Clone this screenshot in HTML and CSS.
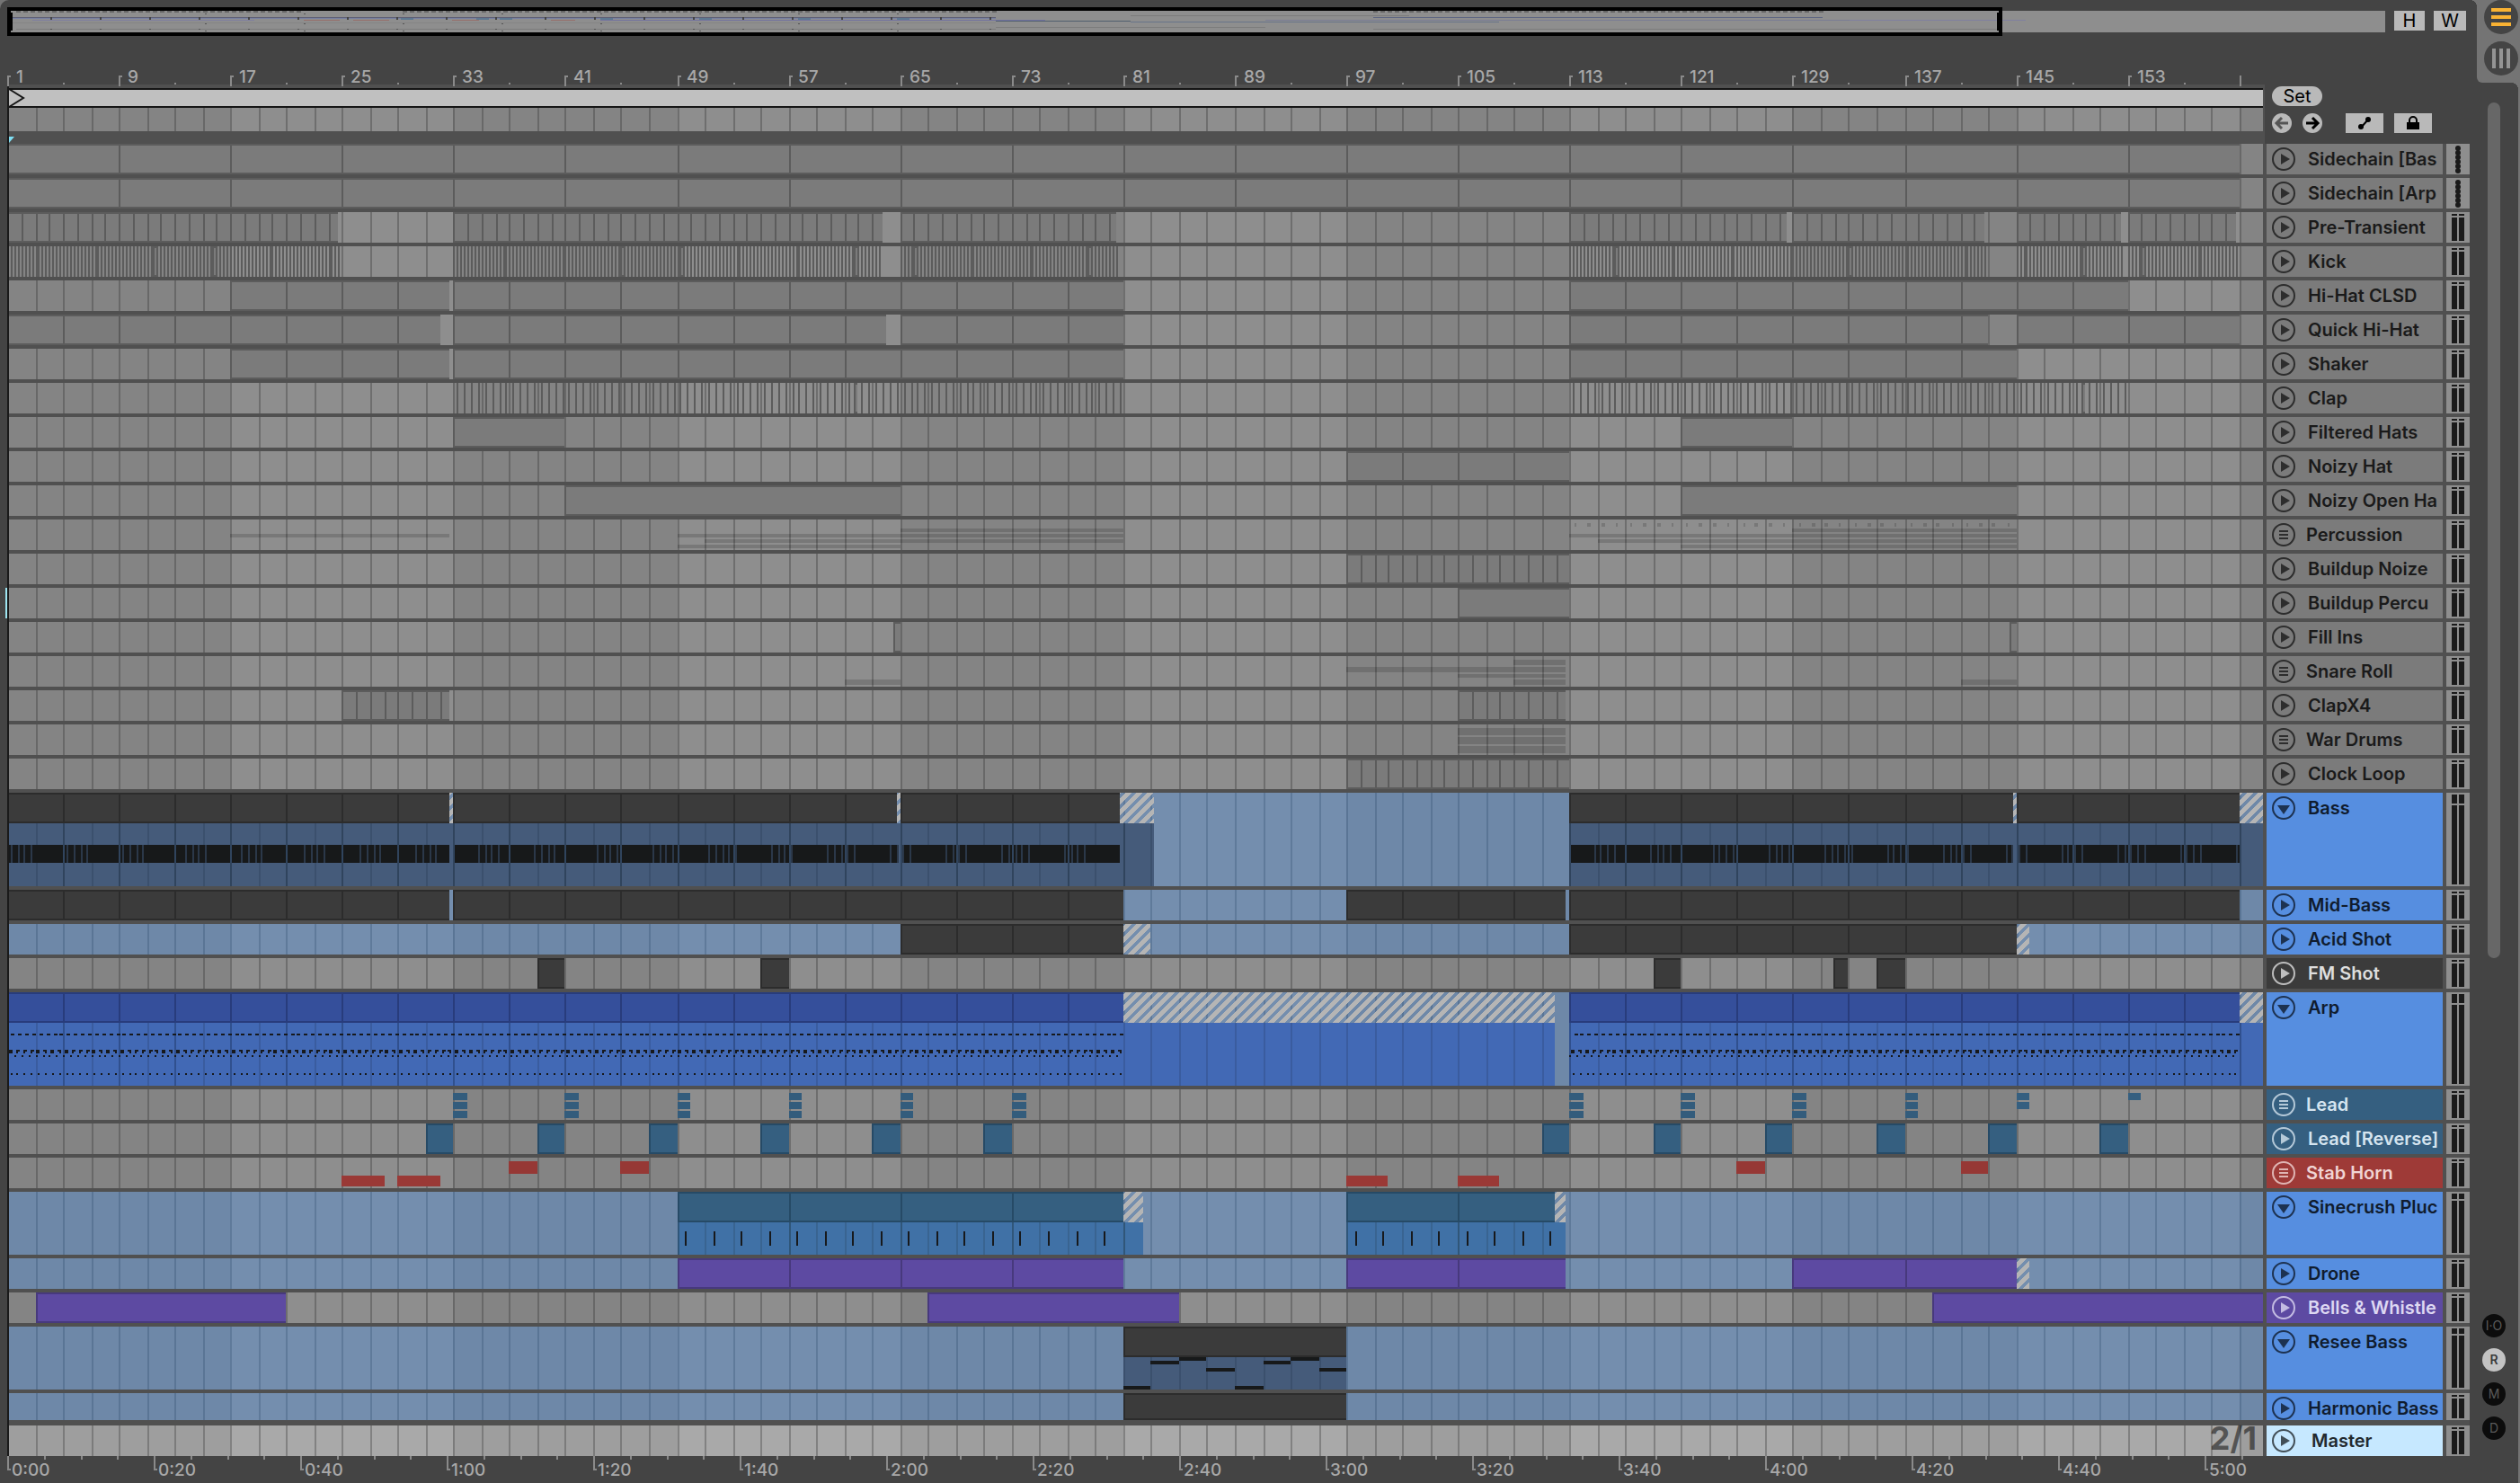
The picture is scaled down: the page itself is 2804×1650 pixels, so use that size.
FILE: index.html
```html
<!DOCTYPE html>
<html lang="en">
<head>
<meta charset="utf-8">
<title>Arrangement View</title>
<link rel="stylesheet" href="styles.css">
</head>
<body>
<svg class="defs" aria-hidden="true">
  <defs>
    <pattern id="hatch" width="12" height="12" patternUnits="userSpaceOnUse">
      <path d="M-3 3L3 -3M-3 15L15 -3M9 15L15 9" stroke="#b5b5b5" stroke-width="5"/>
    </pattern>
    <symbol id="icon-play" viewBox="0 0 26 26"><circle cx="13" cy="13" r="12" fill="none" stroke="currentColor" stroke-width="2"/><path d="M10 7L20 13L10 19Z" fill="currentColor"/></symbol>
    <symbol id="icon-open" viewBox="0 0 26 26"><circle cx="13" cy="13" r="12" fill="none" stroke="currentColor" stroke-width="2"/><path d="M6 10H20L13 20Z" fill="currentColor"/></symbol>
    <symbol id="icon-group" viewBox="0 0 26 26"><circle cx="13" cy="13" r="12" fill="none" stroke="currentColor" stroke-width="2"/><path d="M8 9H18M8 13H18M8 17H18" stroke="currentColor" stroke-width="2"/></symbol>
  </defs>
</svg>
<main class="app">
  <div class="top">
    <svg class="overview" id="overview" role="img" aria-label="Arrangement overview"></svg>
    <button class="square fit-height">H</button>
    <button class="square fit-width">W</button>
  </div>
  <nav class="views" aria-label="Views">
    <button class="view" aria-label="Arrangement view"><svg width="38" height="38"><circle cx="19" cy="19" r="19" fill="#444"/><path d="M8 11H30M8 19H30M8 27H30" stroke="#f9b233" stroke-width="4"/></svg></button>
    <button class="view" aria-label="Session view"><svg width="38" height="38"><circle cx="19" cy="19" r="19" fill="#444"/><path d="M11 8V30M19 8V30M27 8V30" stroke="#949494" stroke-width="4"/></svg></button>
  </nav>
  <div class="body">
    <div class="content">
      <svg class="bar-ruler" id="bar-ruler"></svg>
      <div class="head">
        <div class="head-lanes">
          <svg class="scrub" id="scrub"></svg>
          <svg class="lane" id="locators"></svg>
          <svg class="insert" width="16" height="14"><path d="M2 6H8L2 13Z" fill="#7fe0f5"/></svg>
        </div>
        <div class="controls">
          <button class="set">Set</button>
          <div class="control-row">
            <button class="round" aria-label="Previous locator"><svg width="22" height="22"><path d="M18 11H6M11 5L5 11L11 17" fill="none" stroke="#555" stroke-width="3"/></svg></button>
            <button class="round" aria-label="Next locator"><svg width="22" height="22"><path d="M4 11H16M11 5L17 11L11 17" fill="none" stroke="#000" stroke-width="3"/></svg></button>
            <button class="square tool" aria-label="Automation mode"><svg width="42" height="22"><path d="M17 16L25 7" stroke="#000" stroke-width="2"/><circle cx="17" cy="15" r="3" fill="#000"/><circle cx="25" cy="7" r="3" fill="#000"/></svg></button>
            <button class="square tool lock" aria-label="Lock envelopes"><svg width="42" height="22"><path d="M14 10H28V18H14Z" fill="#000"/><path d="M17 11V8A4 4 0 0 1 25 8V11" fill="none" stroke="#000" stroke-width="2"/></svg></button>
          </div>
        </div>
      </div>
      <div class="tracks" id="tracks"></div>
      <svg class="time-ruler" id="time-ruler"></svg>
    </div>
    <aside class="side">
      <div class="thumb"></div>
      <div class="sections">
        <button class="section">I·O</button>
        <button class="section on">R</button>
        <button class="section">M</button>
        <button class="section">D</button>
      </div>
    </aside>
  </div>
</main>
<script src="script.js"></script>
</body>
</html>
```
FILE: styles.css
```css
* { box-sizing: border-box; }
body {
  margin: 0;
  background: #747474;
  color: #1a1a1a;
  font-family: Inter, "Liberation Sans", sans-serif;
  font-size: 20px;
}
button { margin: 0; padding: 0; border: 0; background: none; color: inherit; font: inherit; }
svg { display: block; shape-rendering: crispEdges; }
button svg, .insert, .meter { shape-rendering: auto; }
.defs { position: absolute; width: 0; height: 0; }
.app {
  position: relative;
  min-height: 100vh;
  margin-right: 2px;
  background: #444;
  border-radius: 10px 0 0 0;
}
.top { display: flex; padding: 8px 58px 0 8px; }
.overview { flex: 1; min-width: 0; height: 32px; margin-right: 10px; }
.square { background: #b9b9b9; color: #000; }
.fit-height, .fit-width { height: 22px; margin-top: 4px; line-height: 22px; }
.fit-height { width: 34px; margin-right: 10px; }
.fit-width { width: 36px; }
.views {
  position: absolute;
  top: 0;
  right: -2px;
  width: 48px;
  height: 92px;
  padding-left: 8px;
  background: #747474;
  border-bottom-left-radius: 6px;
}
.views::before {
  content: "";
  position: absolute;
  top: 0;
  left: -8px;
  width: 8px;
  height: 8px;
  background: radial-gradient(circle at 0 100%, #444 8px, #747474 8px);
}
.views::after {
  content: "";
  position: absolute;
  top: 92px;
  right: 2px;
  width: 8px;
  height: 8px;
  background: radial-gradient(circle at 0 100%, #444 8px, #747474 8px);
}
.view { display: block; margin-bottom: 8px; }

.body { display: flex; padding-left: 8px; }
.content { flex: 1; min-width: 0; }
.bar-ruler { width: 100%; height: 56px; }
.head { display: flex; gap: 8px; }
.head-lanes { flex: 1; min-width: 0; height: 64px; padding-right: 2px; background: #505050; }
.scrub { width: 100%; height: 24px; }
.head-lanes .lane { width: 100%; height: 26px; }
.controls { width: 220px; }
.set { display: block; width: 56px; height: 22px; border-radius: 11px; background: #b9b9b9; color: #000; line-height: 22px; }
.control-row { display: flex; margin-top: 8px; }
.round { width: 22px; height: 22px; margin-right: 12px; border-radius: 50%; background: #b9b9b9; }
.tool { width: 42px; height: 22px; margin-left: 14px; }
.lock { margin-left: 12px; }

.tracks { position: relative; background: #505050; }
.tracks::before { content: ""; position: absolute; left: 0; top: -64px; bottom: 0; width: 2px; background: #1a1a1a; }
.track { display: flex; gap: 4px; margin-bottom: 4px; height: 34px; }
.track.mid { height: 70px; }
.track.tall { height: 104px; }
.track.cut { height: 30px; margin-bottom: 6px; }
.track:last-child { margin-bottom: 0; }
.track .lane { flex: 1; min-width: 0; height: 100%; }
.track:last-child .lane { overflow: visible; }
.name {
  display: flex;
  width: 196px;
  gap: 14px;
  padding: 4px 0 0 6px;
  overflow: hidden;
  white-space: nowrap;
  font-weight: 600;
  line-height: 26px;
  background: #7b7b7b;
}
.name.group { gap: 12px; }
.toggle { flex: none; width: 26px; height: 26px; opacity: .8; }
.toggle svg { width: 26px; height: 26px; }
.name.blue { background: #568ee0; color: #101c2e; }
.name.dark { background: #3b3b3b; color: #dedede; }
.name.teal { background: #355f80; color: #d5e4ef; }
.name.red { background: #9e3a37; color: #f0d4d3; }
.name.purple { background: #5d4aa2; color: #ddd8f2; }
.name.master { background: #c6e8ff; color: #22292e; gap: 18px; }
.meter { width: 26px; height: 100%; background: #8e8e8e; }
.time-ruler { width: 100%; height: 30px; }

.side { display: flex; flex-direction: column; justify-content: space-between; width: 54px; padding: 74px 0 48px 0; }
.thumb { flex: 0 1 952px; width: 14px; margin-left: 20px; border-radius: 7px; background: #676767; }
.sections { display: flex; flex-direction: column; gap: 12px; margin-left: 14px; }
.section { width: 26px; height: 26px; border-radius: 50%; background: #0c0c0c; color: #5a5a5a; font-size: 14px; line-height: 26px; }
.section.on { background: #c3c3c3; color: #3a3a3a; font-weight: 600; }
svg text { font-family: Inter, "Liberation Sans", sans-serif; font-size: 19px; font-weight: 500; fill: #a8a8a8; }
svg .zoom-label { font-size: 36px; font-weight: 700; fill: #000; fill-opacity: .5; }
```
FILE: script.js
```js
// The visible part of the song, in bars, and the colours of each kind of clip.
const VISIBLE = 161.7;
const END = 170;
const FILL = { grey: ['#7b7b7b', '#5c5c5c'], dark: ['#3b3b3b', '#2c2c2c'], arp: ['#354f9b', '#283c7c'],
  teal: ['#355f80', '#264a66'], purple: ['#5d4aa2', '#47397d'] };
const LANE = { grey: ['#848484', '#8e8e8e', '#686868', '#6e6e6e'], blue: ['#6e88a8', '#748eae', '#5a7595', '#5f7a9a'],
  master: ['#9e9e9e', '#a9a9a9', '#7b7b7b', '#818181'] };

const rect = (x, y, w, h, fill) => w > 0 ? `<rect x="${x}" y="${y}" width="${w}" height="${h}" fill="${fill}"/>` : '';
// Positions snap to two-pixel steps.
const at = (bar, width) => Math.min(Math.round(bar * width / VISIBLE / 2) * 2, width);

function grid(width, h, kind) {
  const c = LANE[kind];
  let s = '';
  for (let b = 0; b < VISIBLE; b += 16) {
    s += rect(at(b, width), 0, at(b + 16, width) - at(b, width), h, c[(b / 16) % 2]);
  }
  for (let b = 2; b < VISIBLE; b += 2) s += rect(at(b, width), 0, 2, h, c[2 + Math.floor(b / 16) % 2]);
  return s;
}
function clip(width, from, to, h, colour) {
  const x = at(from, width), w = at(to, width) - x, [body, edge] = FILL[colour];
  return rect(x, 0, w, h, edge) + rect(x + 2, 2, w - 2, h - 4, body);
}
// A run of clips, one every `step` bars.
const run = (from, to, step, colour = 'grey') => (w, h) => {
  let s = '';
  for (let b = from; b < to; b += step) s += clip(w, b, Math.min(b + step, to), Math.min(h, 34), colour);
  return s;
};
const hits = (from, to, step, offset, length) => w => {
  let s = '';
  for (let b = from + offset; b < to; b += step) s += clip(w, b, b + length, 34, 'grey');
  return s;
};
const bar = (from, to, y, h, fill = 'rgba(0,0,0,.15)') => w => rect(at(from, w), y, at(to, w) - at(from, w), h, fill);
const hatch = (from, to) => bar(from, to, 0, 34, 'url(#hatch)');
const stack = (from, to, rows, fill) => w => rows.map(([y, h]) => bar(from, to, y, h, fill)(w)).join('');
const lower = (from, to, body, minor, major, step) => (w, h) => {
  let s = bar(from, to, 34, h - 34, body)(w);
  for (let b = from; b < to; b += 2) s += rect(at(b, w), 34, 2, h - 34, b % step ? minor : major);
  return s;
};
const ticks = (from, to, step, offset, y, wide, h = 2) => w => {
  let s = '';
  for (let b = from + offset; b < to; b += step) s += rect(at(b, w), y, wide, h, '#17191c');
  return s;
};
const bassNotes = (from, to) => w => {
  let s = '';
  for (let b = from; b < to; b += 4) {
    const x = at(b, w) + 2;
    s += rect(x, 58, at(Math.min(b + 4, to), w) - x, 20, '#17191a');
    const first = .22 + .5 * Math.floor((b / 4) / 2.5);
    for (let i = 0; i < 4; i++) {
      const g = b + (first + i * .5) % 4;
      if (g < to) s += rect(at(g, w), 58, 2, 20, '#2b3849');
    }
  }
  return s;
};
const arpNotes = (from, to) => w => [
  ticks(from, to, .5, .3, 46, 4), ticks(from, to, .5, .12, 64, 4),
  ticks(from, to, .5, .2, 66, 2), ticks(from, to, 1, .12, 66, 2, 2), ticks(from, to, .5, .02, 70, 2), ticks(from, to, .5, .2, 90, 2)
].map(f => f(w)).join('');
const percussionDots = w => {
  let s = '';
  for (let b = 112; b < 144; b += 4) {
    [[.4, 2], [1.3, 4], [2.3, 4], [3.35, 2]].forEach(([o, n]) => { s += rect(at(b + o, w), 4, n, 4, 'rgba(0,0,0,.15)'); });
  }
  return s;
};
const each = (starts, make) => starts.map(make);
const THREE = [[4, 8], [14, 8], [24, 8]];
const BASS = ['#455b7a', '#3b506d', '#30445d', 4], ARP = ['#4269b5', '#3a5c9f', '#30508e', 4], SINE = ['#4071a6', '#396491', '#305679', 8];

const TRACKS = [
  ['Sidechain [Bas', { midi: 1 }, run(0, 160, 8)],
  ['Sidechain [Arp', { midi: 1 }, run(0, 160, 8)],
  ['Pre-Transient', {}, run(0, 23.7, 1), run(32, 62.7, 1), run(64, 79.5, 1), run(112, 127.5, 1), run(128, 141.7, 1), run(144, 151.5, 1), run(152, 159.75, 1)],
  ['Kick', {}, ...[[0, 24], [32, 62.7], [64, 79.7], [112, 127.9], [128, 142], [144, 151.6], [152, 159.9]].map(([a, b]) => hits(a, b, .25, 0, .132))],
  ['Hi-Hat CLSD', {}, run(16, 31.75, 4), run(32, 80, 4), run(112, 152, 4)],
  ['Quick Hi-Hat', {}, run(0, 31, 4), run(32, 63, 4), run(64, 80, 4), run(112, 142, 4), run(144, 160, 4)],
  ['Shaker', {}, run(16, 31.75, 4), run(32, 80, 4), run(112, 144, 4)],
  ['Clap', {}, hits(32, 80, .5, .25, .13), hits(112, 152, .5, .25, .13)],
  ['Filtered Hats', {}, run(32, 40, 8), run(120, 128, 8)],
  ['Noizy Hat', {}, run(96, 112, 4)],
  ['Noizy Open Ha', {}, run(40, 64, 24), run(120, 144, 24)],
  ['Percussion', { icon: 'group' }, bar(16, 31.75, 16, 4), bar(48, 80, 16, 4), bar(50, 80, 22, 4), bar(48, 64, 28, 4), bar(64, 80, 10, 4),
    bar(128, 144, 10, 4), bar(112, 144, 16, 4), bar(114, 144, 22, 4), bar(120, 144, 28, 4), percussionDots],
  ['Buildup Noize', {}, run(96, 112, 1)],
  ['Buildup Percu', {}, run(104, 112, 8)],
  ['Fill Ins', {}, run(63.5, 64, 1), run(143.5, 144, 1)],
  ['Snare Roll', { icon: 'group' }, bar(60, 64, 26, 6), bar(96, 111.75, 12, 6), bar(104, 111.75, 20, 4), bar(108, 111.75, 4, 6), bar(108, 111.75, 26, 6), bar(140, 144, 26, 6)],
  ['ClapX4', {}, run(24, 31.75, 1), run(104, 111.75, 1)],
  ['War Drums', { icon: 'group' }, stack(104, 111.75, THREE)],
  ['Clock Loop', {}, run(96, 112, 1)],
  ['Bass', { size: 'tall', lane: 'blue', name: 'blue' }, lower(0, 82.2, ...BASS), lower(112, END, ...BASS),
    run(0, 31.75, 4, 'dark'), run(32, 63.75, 4, 'dark'), run(64, 79.7, 4, 'dark'), run(112, 143.75, 4, 'dark'), run(144, 160, 4, 'dark'),
    hatch(31.75, 32), hatch(63.75, 64), hatch(79.7, 82.2), hatch(143.75, 144), hatch(160, END),
    bassNotes(0, 31.75), bassNotes(32, 63.75), bassNotes(64, 79.7), bassNotes(112, 143.75), bassNotes(144, 160)],
  ['Mid-Bass', { lane: 'blue', name: 'blue' }, run(0, 31.75, 4, 'dark'), run(32, 80, 4, 'dark'), run(96, 111.7, 4, 'dark'), run(112, 160, 4, 'dark')],
  ['Acid Shot', { lane: 'blue', name: 'blue' }, run(64, 80, 4, 'dark'), hatch(80, 81.9), run(112, 144, 4, 'dark'), hatch(144, 145)],
  ['FM Shot', { name: 'dark' }, ...each([38, 54, 118, 134], b => run(b, b + 2, 2, 'dark')), run(130.9, 132, 2, 'dark')],
  ['Arp', { size: 'tall', lane: 'blue', name: 'blue' }, lower(0, 80, ...ARP), lower(80, 110.9, ARP[0], ARP[1], ARP[1], 4), lower(112, END, ...ARP),
    run(0, 80, 4, 'arp'), hatch(80, 110.9), run(112, 160, 4, 'arp'), hatch(160, END), arpNotes(0, 80), arpNotes(112, 160)],
  ['Lead', { icon: 'group', name: 'teal' }, ...each([32, 40, 48, 56, 64, 72, 112, 120, 128, 136], b => stack(b, b + 1, THREE, '#335c7c')),
    stack(144, 145, THREE.slice(0, 2), '#355f80'), stack(152, 153, THREE.slice(0, 1), '#355f80')],
  ['Lead [Reverse]', { name: 'teal' }, ...each([30, 38, 46, 54, 62, 70, 110, 118, 126, 134, 142, 150], b => run(b, b + 2, 2, 'teal'))],
  ['Stab Horn', { icon: 'group', name: 'red' }, ...each([24, 28, 96, 104], b => bar(b, b + 3, 20, 12, '#9a3936')),
    ...each([36, 44, 124, 140], b => bar(b, b + 2, 4, 14, '#963835'))],
  ['Sinecrush Pluc', { size: 'mid', lane: 'blue', name: 'blue' }, lower(48, 81.4, ...SINE), lower(96, 111.7, ...SINE),
    run(48, 80, 8, 'teal'), hatch(80, 81.4), run(96, 110.9, 8, 'teal'), hatch(110.9, 111.7), ticks(48, 80, 2, .6, 44, 2, 16), ticks(96, 111, 2, .6, 44, 2, 16)],
  ['Drone', { lane: 'blue', name: 'blue' }, run(48, 80, 8, 'purple'), run(96, 111.7, 8, 'purple'), run(128, 144, 8, 'purple'), hatch(144, 145)],
  ['Bells & Whistle', { name: 'purple' }, run(2, 20, 18, 'purple'), run(66, 84, 18, 'purple'), run(138, END, 99, 'purple')],
  ['Resee Bass', { size: 'mid', lane: 'blue', name: 'blue' }, lower(80, 96, ...BASS.slice(0, 2), '#3b506d', 4), run(80, 96, 16, 'dark'),
    ...[66, 38, 34, 46, 66, 38, 34, 46].map((y, i) => bar(80 + i * 2, 82 + i * 2, y, 4, '#17191a'))],
  ['Harmonic Bass', { size: 'cut', lane: 'blue', name: 'blue' }, run(80, 96, 16, 'dark')],
  ['Master', { lane: 'master', name: 'master' }, (w) => `<text class="zoom-label" x="${w - 7}" y="27" text-anchor="end">2/1</text>`]
];

const HEIGHT = { mid: 70, tall: 104, cut: 30 };
const OPEN = ['Bass', 'Arp', 'Sinecrush Pluc', 'Resee Bass'];

function meter(h, midi) {
  let s = '';
  if (midi) {
    s += rect(12, 4, 2, 26, '#1a1a1a');
    for (let i = 0; i < 6; i++) s += `<circle cx="13" cy="${5 + i * 5}" r="3" fill="#1a1a1a"/>`;
    return s;
  }
  const cap = h > 100 ? 10 : h > 60 ? 6 : 2;
  [6, 14].forEach(x => { s += rect(x, 2, 6, cap, '#1a1a1a') + rect(x, cap + 4, 6, h - cap - 6, '#1a1a1a'); });
  return s;
}

const tracks = document.getElementById('tracks');
tracks.innerHTML = TRACKS.map(([name, o]) => {
  const h = HEIGHT[o.size] || 34, icon = o.icon || (OPEN.includes(name) ? 'open' : 'play');
  const selected = name === 'Buildup Percu' ? ' selected' : '';
  return `<div class="track ${o.size || ''}${selected}"><svg class="lane"></svg>
    <div class="name ${o.name || ''} ${o.icon || ''}"><button class="toggle" aria-label="Unfold"><svg><use href="#icon-${icon}"/></svg></button><span>${name.replace('&', '&amp;')}</span></div>
    <svg class="meter">${meter(h, o.midi)}</svg></div>`;
}).join('');
// The insert cursor sits at the start of the selected track.
tracks.querySelector('.selected').style.boxShadow = 'inset 0 0 0 0 transparent, -2px 0 0 0 #9fe6f2';

function drawOverview() {
  const svg = document.getElementById('overview'), w = svg.clientWidth, k = w / 2646;
  let s = rect(4, 4, w - 4, 24, '#8e8e8e');
  const line = (a, b, y, h, c) => { s += rect(Math.round(a * k), y, Math.round((b - a) * k), h, c); };
  [[10, 330], [440, 1100], [1520, 2020]].forEach(([a, b]) => {
    for (let x = a; x < b; x += 8) line(x, x + 5, 4, 2, '#666');
  });
  line(6, 1100, 11, 1, '#5f6075'); line(6, 1100, 12, 1, '#7780a0');
  line(28, 275, 14, 1, '#7f80a0'); line(660, 1155, 14, 1, '#7273a0');
  [[330, 370], [385, 425], [495, 525], [605, 632]].forEach(([a, b]) => line(a, b, 14, 1, '#96706c'));
  [438, 522, 548, 660, 770, 880, 990].forEach(x => line(x, x + 14, 12, 2, '#5d7890'));
  line(0, 1100, 17, 1, '#858585'); line(10, 1100, 24, 1, '#7c7c7c');
  line(1100, 1250, 15, 1, '#52606f'); line(1250, 1660, 16, 1, '#67758a');
  line(1100, 1400, 22, 1, '#7c7c7c'); line(1250, 1560, 9, 1, '#7b7b7b'); line(1400, 2220, 14, 1, '#7a7c94');
  line(1520, 2020, 11, 1, '#5e6682'); line(2050, 2246, 14, 1, '#7f80a0'); line(1520, 2220, 24, 1, '#7c7c7c');
  for (let x = 48; x < 1100; x += 55) { line(x, x + 2, 11, 3, '#444'); line(x, x + 2, 24, 1, '#555'); }
  for (let x = 220; x < 1100; x += 110) { line(x, x + 2, 7, 1, '#555'); line(x, x + 2, 18, 1, '#555'); line(x, x + 2, 26, 1, '#555'); }
  const view = Math.round(2220 * k);
  s += `<rect x="2" y="2" width="${view - 4}" height="28" fill="none" stroke="#000" stroke-width="4"/>`;
  s += rect(4, 6, 2, 20, '#000') + rect(view - 6, 6, 2, 20, '#000');
  svg.innerHTML = s;
}

function draw() {
  const lanes = tracks.querySelectorAll('.lane'), w = Math.round(lanes[0].getBoundingClientRect().width);
  lanes.forEach((svg, i) => {
    const [, o, ...items] = TRACKS[i], h = HEIGHT[o.size] || 34;
    svg.innerHTML = grid(w, h, o.lane || 'grey') + items.map(f => f(w, h)).join('');
  });
  document.getElementById('locators').innerHTML = grid(w, 26, 'grey');
  document.getElementById('scrub').innerHTML = rect(0, 2, w, 22, '#151515') + rect(0, 4, w, 18, '#c0c0c0') +
    '<path d="M2 3L18 13L2 23" fill="#c0c0c0" stroke="#151515" stroke-width="2" shape-rendering="auto"/>';

  let s = rect(0, 54, w + 2, 2, '#505050');
  for (let b = 0; b <= 160; b += 4) {
    const x = at(b, w);
    if (b % 8) { s += rect(x, 52, 2, 2, '#8a8a8a'); continue; }
    s += rect(x, 44, 2, 12, '#8a8a8a');
    if (b < 160) s += rect(x, 44, 4, 2, '#8a8a8a') + `<text x="${x + 10}" y="52">${b + 1}</text>`;
  }
  document.getElementById('bar-ruler').innerHTML = s;

  s = '';
  const five = w * 163 / 2510 / 4;
  for (let i = 0; i * five < w; i++) {
    const x = Math.round(i * five);
    if (i % 4) { s += rect(x, 0, 2, 4, '#8a8a8a'); continue; }
    const sec = i * 5;
    s += rect(x, 0, 2, 16, '#8a8a8a') + rect(x, 14, 4, 2, '#8a8a8a') +
      `<text x="${x + 5}" y="22">${Math.floor(sec / 60)}:${String(sec % 60).padStart(2, '0')}</text>`;
  }
  document.getElementById('time-ruler').innerHTML = s;
  drawOverview();
}
draw();
window.addEventListener('resize', draw);
```
